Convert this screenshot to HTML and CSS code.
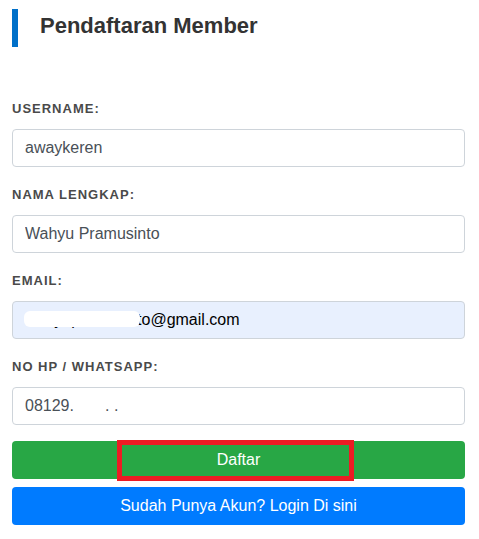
FILE: index.html
```html
<!DOCTYPE html>
<html lang="id">
<head>
    <meta charset="UTF-8">
    <meta name="viewport" content="width=device-width, initial-scale=1.0">
    <title>Pendaftaran Member</title>
    <link rel="stylesheet" href="styles.css">
</head>
<body>
   <div class="container">
    <h2 class="judul">Pendaftaran Member</h2>

    <form action="" id="form">
        <div class="grup">
            <label for="username">Username:</label>
            <input type="text" id="username" value="awaykeren" class="input">
        </div>
        <div class="grup">
            <label for="nama">Nama Lengkap:</label>
            <input type="text" id="nama" value="Wahyu Pramusinto" class="input">
        </div>
        <div class="grup">
            <label for="email">Email:</label>
            <div class="sensor-wrap">
                <input type="text" id="email" value="wahyupramusinto@gmail.com" class="input autofill">
                <span class="sensor sensor-email"></span>
            </div>
        </div>
        <div class="grup grup-akhir">
            <label for="hp">No HP / Whatsapp:</label>
            <input type="text" id="hp" value="08129.       . ." class="input">
        </div>

        <div class="tombol-wrap">
            <button type="submit" class="btn btn-hijau">Daftar</button>
            <span class="kotak-merah"></span>
        </div>
        <button type="button" class="btn btn-biru">Sudah Punya Akun? Login Di sini</button>
    </form>
   </div>
</body>
</html>
```

FILE: styles.css
```css
body{
    margin: 0;
    font-family: "Liberation Sans", Arial, sans-serif;
}

.container {
    padding: 9px 14px 0 12px;
}

.judul {
    margin: 0;
    border-left: 6px solid #0070c9;
    padding: 0 0 4px 22px;
    height: 34px;
    line-height: 34px;
    font-size: 22px;
    font-weight: 700;
    color: #333;
}

#form {
    display: flex;
    flex-direction: column;
    margin-top: 54px;
}

.grup {
    display: flex;
    flex-direction: column;
    margin-bottom: 20px;
}

.grup-akhir {
    margin-bottom: 16px;
}

label {
    font-size: 13px;
    line-height: 15px;
    font-weight: 700;
    letter-spacing: 1px;
    text-transform: uppercase;
    color: #4a4a4a;
    margin-bottom: 13px;
}

.input {
    box-sizing: border-box;
    width: 100%;
    height: 38px;
    padding: 0 12px;
    border: 1px solid #ced4da;
    border-radius: 4px;
    background-color: #fff;
    font-family: "Liberation Sans", Arial, sans-serif;
    font-size: 16px;
    color: #495057;
}

.autofill {
    background-color: #e8f0fe;
    color: #000;
}

.sensor-wrap {
    position: relative;
}

.sensor {
    position: absolute;
    background: #fff;
    border-radius: 6px;
}

.sensor-email {
    left: 12px;
    top: 10px;
    width: 116px;
    height: 16px;
}

.btn {
    box-sizing: border-box;
    width: 100%;
    height: 38px;
    border: none;
    border-radius: 4px;
    color: #fff;
    font-family: "Liberation Sans", Arial, sans-serif;
    font-size: 16px;
}

.btn-hijau {
    background-color: #28a745;
}

.btn-biru {
    background-color: #007bff;
    margin-top: 8px;
}

.tombol-wrap {
    position: relative;
}

.kotak-merah {
    position: absolute;
    box-sizing: border-box;
    left: 105px;
    top: -1px;
    width: 237px;
    height: 41px;
    border: 5px solid #ed1c24;
}
```
